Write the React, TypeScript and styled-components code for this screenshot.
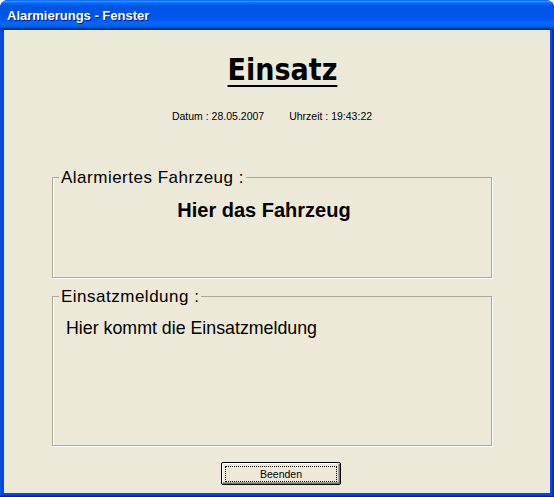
import React from "react";
import styled, { createGlobalStyle } from "styled-components";

const GlobalStyle = createGlobalStyle`
  html, body {
    margin: 0;
    padding: 0;
    background: #ffffff;
  }
  #root {
    width: 554px;
    height: 497px;
  }
`;

const UI_FONT = `"Liberation Sans", Arial, sans-serif`;

const Window = styled.div`
  width: 554px;
  height: 497px;
  box-sizing: border-box;
  display: flex;
  flex-direction: column;
  padding: 0 4px 4px;
  border-radius: 8px 8px 0 0;
  background: #0846dc;
  box-shadow: inset -1px -1px 0 #001ea0, inset -2px -2px 0 #0633c8,
    inset 1px 0 0 #0a52e6;
  overflow: hidden;
`;

const TitleBar = styled.header`
  height: 30px;
  margin: 0 -4px;
  box-sizing: border-box;
  padding: 2px 0 0 7px;
  border-radius: 8px 8px 0 0;
  background: linear-gradient(
    to bottom,
    #0058ee 0%,
    #3593ff 4%,
    #288eff 6%,
    #127dff 8%,
    #036ffc 10%,
    #0262ee 14%,
    #0057e5 20%,
    #0054e3 24%,
    #0055eb 56%,
    #005bf5 66%,
    #026afe 76%,
    #0062ef 86%,
    #0052d6 92%,
    #0040ab 94%,
    #003092 100%
  );
  font: bold 13px/28px ${UI_FONT};
  color: #ffffff;
  text-shadow: 1px 1px 0 #0a1883;
  white-space: nowrap;
`;

const Client = styled.main`
  flex: 1;
  background: #ece9d8;
  display: flex;
  flex-direction: column;
`;

const Column = styled.div`
  width: 440px;
  margin-left: 48px;
  display: flex;
  flex-direction: column;
`;

const Heading = styled.h1`
  margin: 22px 0 0;
  padding-left: 21px;
  text-align: center;
  font-family: "Comic Sans MS", "DejaVu Sans Condensed", "DejaVu Sans",
    sans-serif;
  font-stretch: condensed;
  font-weight: bold;
  font-size: 30px;
  line-height: 36px;
  color: #000000;
  text-decoration: underline;
  text-decoration-thickness: 2px;
  text-underline-offset: 5px;
`;

const DateRow = styled.div`
  margin-top: 22px;
  display: flex;
  justify-content: center;
  gap: 25px;
  font: 10.5px/13px ${UI_FONT};
  color: #000000;
`;

const Group = styled.fieldset<{ $gap: number }>`
  margin: ${(p) => p.$gap}px 0 0;
  padding: 0;
  min-width: 0;
  border: 1px solid #aca899;
  box-shadow: 1px 1px 0 #ffffff, inset 1px 0 0 #ffffff;
`;

const Legend = styled.legend`
  margin-left: 6px;
  padding: 0 2px;
  font: 17px/19px ${UI_FONT};
  letter-spacing: 0.5px;
  color: #000000;
`;

const VehicleText = styled.div`
  height: 78px;
  padding: 12px 16px 0 0;
  text-align: center;
  font: bold 20px/22px ${UI_FONT};
  color: #000000;
`;

const MessageText = styled.div`
  height: 127px;
  padding: 12px 0 0 13px;
  font: 17.8px/20px ${UI_FONT};
  color: #000000;
`;

const ButtonRow = styled.div`
  margin-top: 16px;
  padding-left: 18px;
  display: flex;
  justify-content: center;
`;

const Button = styled.button`
  width: 120px;
  height: 23px;
  box-sizing: border-box;
  display: flex;
  padding: 3px 3px 2px 3px;
  border: 1px solid #000000;
  border-radius: 2px;
  background: #ece9d8;
  box-shadow: inset 1px 1px 0 #ffffff, inset -1px -1px 0 #716f64,
    inset -2px -2px 0 #aca899;
  cursor: pointer;
`;

const FocusRing = styled.span`
  flex: 1;
  display: flex;
  align-items: center;
  justify-content: center;
  border: 1px dotted #000000;
  font: 10.5px/1 ${UI_FONT};
  color: #000000;
`;

export default function App() {
  return (
    <>
      <GlobalStyle />
      <Window>
        <TitleBar>Alarmierungs - Fenster</TitleBar>
        <Client>
          <Column>
            <Heading>Einsatz</Heading>
            <DateRow>
              <span>Datum : 28.05.2007</span>
              <span>Uhrzeit : 19:43:22</span>
            </DateRow>
            <Group $gap={45}>
              <Legend>Alarmiertes Fahrzeug :</Legend>
              <VehicleText>Hier das Fahrzeug</VehicleText>
            </Group>
            <Group $gap={9}>
              <Legend>Einsatzmeldung :</Legend>
              <MessageText>Hier kommt die Einsatzmeldung</MessageText>
            </Group>
            <ButtonRow>
              <Button type="button">
                <FocusRing>Beenden</FocusRing>
              </Button>
            </ButtonRow>
          </Column>
        </Client>
      </Window>
    </>
  );
}
